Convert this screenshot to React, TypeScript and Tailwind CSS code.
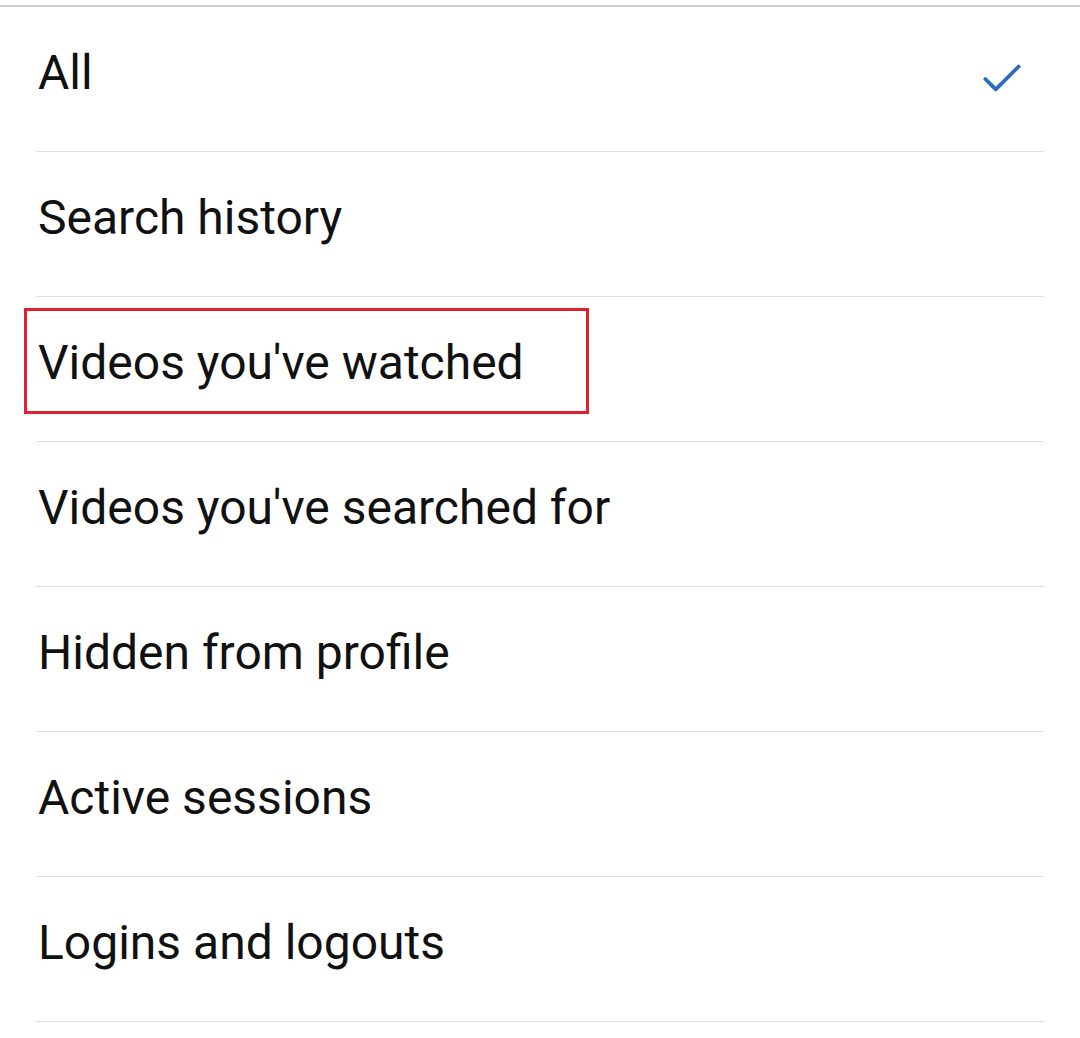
import { Check } from 'lucide-react';

const items = [
  { label: 'All', checked: true },
  { label: 'Search history' },
  { label: "Videos you've watched", highlight: true },
  { label: "Videos you've searched for" },
  { label: 'Hidden from profile' },
  { label: 'Active sessions' },
  { label: 'Logins and logouts' },
];

export default function App() {
  return (
    <div className="w-[1080px] h-[1038px] bg-white overflow-hidden font-['Roboto',sans-serif] text-[#111]">
      <div className="pt-[5px]">
        <div className="h-[2px] bg-[#cccccc]" />
      </div>
      <ul className="pl-[36px] pr-[36px]">
        {items.map((item) => (
          <li
            key={item.label}
            className="h-[145px] pb-[12px] flex items-center justify-between border-b border-[#dedede]"
          >
            {item.highlight ? (
              <span className="-ml-[12px] mb-[4px] h-[106px] w-[565px] border-[3px] border-[#e0202f] flex items-center pt-[4px] pl-[11px] text-[48px] leading-none">
                {item.label}
              </span>
            ) : (
              <span className="ml-[2px] text-[48px] leading-none">{item.label}</span>
            )}
            {item.checked && <Check size={50} strokeWidth={1.8} className="mr-[17px] mt-[12px] text-[#2b6cbf]" />}
          </li>
        ))}
      </ul>
    </div>
  );
}
